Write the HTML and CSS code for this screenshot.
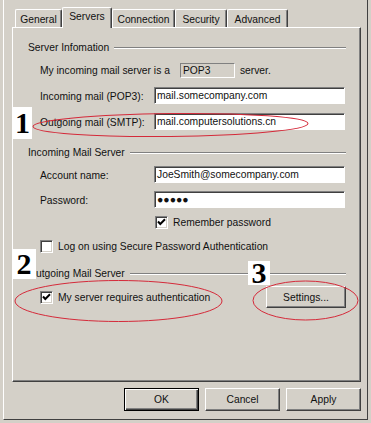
FILE: index.html
```html
<!DOCTYPE html>
<html>
<head>
<meta charset="utf-8">
<link rel="stylesheet" href="styles.css">
</head>
<body>
<div class="window">
  <div class="frame">
    <div class="tabs">
      <div class="tab t-general">General</div>
      <div class="tab tab-active t-servers">Servers</div>
      <div class="tab t-connection">Connection</div>
      <div class="tab t-security">Security</div>
      <div class="tab t-advanced">Advanced</div>
    </div>
    <div class="panel">
      <div class="group g1"><span class="group-label">Server Infomation</span><span class="etch"></span></div>
      <div class="row r-pop"><span>My incoming mail server is a</span><span class="static-box">POP3</span><span>server.</span></div>
      <div class="row r-in"><span class="label">Incoming mail (POP3):</span><div class="input">mail.somecompany.com</div></div>
      <div class="row r-out"><span class="label">Outgoing mail (SMTP):</span><div class="input">mail.computersolutions.cn</div></div>
      <div class="group g2"><span class="group-label">Incoming Mail Server</span><span class="etch"></span></div>
      <div class="row r-acc"><span class="label">Account name:</span><div class="input">JoeSmith@somecompany.com</div></div>
      <div class="row r-pw"><span class="label">Password:</span><div class="input pw">●●●●●</div></div>
      <div class="row r-rem"><span class="checkbox"><svg width="11" height="11" viewBox="0 0 11 11"><path d="M2 4.5 L4.3 7 L9 2.3" fill="none" stroke="#000" stroke-width="2"/></svg></span><span class="cb-text">Remember password</span></div>
      <div class="row r-spa"><span class="checkbox"></span><span class="cb-text">Log on using Secure Password Authentication</span></div>
      <div class="group g3"><span class="group-label">Outgoing Mail Server</span><span class="etch"></span></div>
      <div class="row r-auth"><span class="checkbox"><svg width="11" height="11" viewBox="0 0 11 11"><path d="M2 4.5 L4.3 7 L9 2.3" fill="none" stroke="#000" stroke-width="2"/></svg></span><span class="cb-text">My server requires authentication</span><div class="btn btn-settings">Settings...</div></div>
    </div>
    <div class="buttons">
      <div class="btn btn-default">OK</div>
      <div class="btn">Cancel</div>
      <div class="btn">Apply</div>
    </div>
  </div>
  <svg class="marks" width="371" height="423" viewBox="0 0 371 423">
    <ellipse cx="170.5" cy="125" rx="137.5" ry="11.5" transform="rotate(-0.6 170 125)" fill="none" stroke="#d42a3a" stroke-width="1"/>
    <ellipse cx="118.5" cy="301" rx="103.5" ry="20.5" fill="none" stroke="#d42a3a" stroke-width="1"/>
    <ellipse cx="305.5" cy="300.5" rx="52.5" ry="19.5" fill="none" stroke="#d42a3a" stroke-width="1"/>
  </svg>
  <div class="num n1">1</div>
  <div class="num n2">2</div>
  <div class="num n3">3</div>
</div>
</body>
</html>
```

FILE: styles.css
```css
html, body {
  margin: 0;
  padding: 0;
  background: #d4d0c8;
}

.window {
  position: relative;
  width: 371px;
  height: 423px;
  overflow: hidden;
  background: #d4d0c8;
  font-family: "Liberation Sans", Arial, sans-serif;
  font-size: 10.3px;
  color: #111;
}

.frame {
  margin-left: 3px;
  width: 365px;
  height: 420px;
  box-sizing: border-box;
  border-left: 1px solid #fff;
  border-right: 1px solid #404040;
  border-bottom: 1px solid #404040;
  padding-top: 7px;
}

/* Tabs */
.tabs {
  display: flex;
  align-items: flex-end;
  height: 20px;
  padding-left: 11px;
  position: relative;
  z-index: 1;
}

.tab {
  box-sizing: border-box;
  height: 18px;
  border-top: 1px solid #fff;
  border-left: 1px solid #fff;
  border-right: 1px solid #404040;
  box-shadow: inset -1px 0 #808080;
  border-top-left-radius: 2px;
  border-top-right-radius: 2px;
  background: #d4d0c8;
  display: flex;
  align-items: center;
  justify-content: center;
  line-height: 13px;
  padding-top: 1px;
}

.tab-active {
  height: 21px;
  margin-bottom: -1px;
  padding-top: 0;
  padding-bottom: 3px;
}

.t-general { width: 47px; }
.t-servers { width: 50px; }
.t-connection { width: 63px; }
.t-security { width: 52px; }
.t-advanced { width: 61px; }

/* Panel */
.panel {
  margin-left: 8px;
  width: 349px;
  height: 355px;
  box-sizing: border-box;
  border-top: 1px solid #fff;
  border-left: 1px solid #fff;
  border-right: 1px solid #404040;
  border-bottom: 1px solid #404040;
  box-shadow: inset -1px -1px #808080;
  padding: 0 14px 0 15px;
  display: flex;
  flex-direction: column;
}

.group {
  display: flex;
  align-items: center;
  height: 13px;
  line-height: 13px;
}

.group-label {
  white-space: nowrap;
}

.etch {
  flex: 1;
  height: 1px;
  margin-left: 5px;
  background: #808080;
  border-bottom: 1px solid #fff;
  margin-top: 1px;
}

.g1 { margin-top: 13px; }
.g2 { margin-top: 16px; }
.g3 { margin-top: 14px; }

.row {
  display: flex;
  align-items: center;
  padding-left: 12px;
  white-space: nowrap;
}

.label {
  width: 114px;
  flex: none;
  padding-top: 2px;
}

.input {
  width: 191px;
  height: 17px;
  box-sizing: border-box;
  background: #fff;
  border: 1px solid;
  border-color: #808080 #fff #fff #808080;
  box-shadow: inset 1px 1px #404040;
  padding-left: 2px;
  line-height: 15px;
}

.pw {
  font-size: 10.5px;
  letter-spacing: 0;
}

.static-box {
  width: 55px;
  height: 15px;
  box-sizing: border-box;
  border: 1px solid;
  border-color: #808080 #fff #fff #808080;
  padding-left: 2px;
  line-height: 14px;
  margin-left: 10px;
  margin-right: 5px;
}

.r-pop { margin-top: 9px; height: 15px; }
.r-in { margin-top: 9px; height: 17px; }
.r-out { margin-top: 9px; height: 17px; }
.r-acc { margin-top: 7px; height: 17px; }
.r-pw { margin-top: 8px; height: 17px; }
.r-rem { margin-top: 8px; height: 13px; padding-left: 127px; }
.r-spa { margin-top: 11px; height: 13px; }
.r-auth { margin-top: 6px; height: 22px; }

.checkbox {
  width: 13px;
  height: 13px;
  box-sizing: border-box;
  flex: none;
  background: #fff;
  border: 1px solid;
  border-color: #808080 #fff #fff #808080;
  box-shadow: inset 1px 1px #404040, inset -1px -1px #d4d0c8;
  display: flex;
  align-items: center;
  justify-content: center;
}

.cb-text {
  margin-left: 5px;
  line-height: 13px;
}

/* Buttons */
.btn {
  box-sizing: border-box;
  width: 75px;
  height: 23px;
  background: #d4d0c8;
  border: 1px solid;
  border-color: #fff #404040 #404040 #fff;
  box-shadow: inset -1px -1px #808080;
  display: flex;
  align-items: center;
  justify-content: center;
  line-height: 13px;
}

.btn-default {
  border-color: #000;
  box-shadow: inset 1px 1px #fff, inset -1px -1px #404040, inset -2px -2px #808080;
}

.btn-settings {
  width: 80px;
  height: 22px;
  margin-left: auto;
}

.buttons {
  margin-top: 6px;
  margin-left: 8px;
  width: 349px;
  display: flex;
  justify-content: flex-end;
  gap: 6px;
}

/* Annotations overlay */
.marks {
  position: absolute;
  left: 0;
  top: 0;
  pointer-events: none;
}

.num {
  position: absolute;
  background: #fff;
  font-family: "Liberation Serif", "Times New Roman", serif;
  font-weight: bold;
  font-size: 30px;
  text-align: center;
  color: #000;
}

.n1 { left: 13px; top: 107px; width: 19px; height: 32px; line-height: 32px; }
.n2 { left: 12px; top: 249px; width: 24px; height: 30px; line-height: 30px; }
.n3 { left: 248px; top: 261px; width: 22px; height: 24px; line-height: 24px; }
```
